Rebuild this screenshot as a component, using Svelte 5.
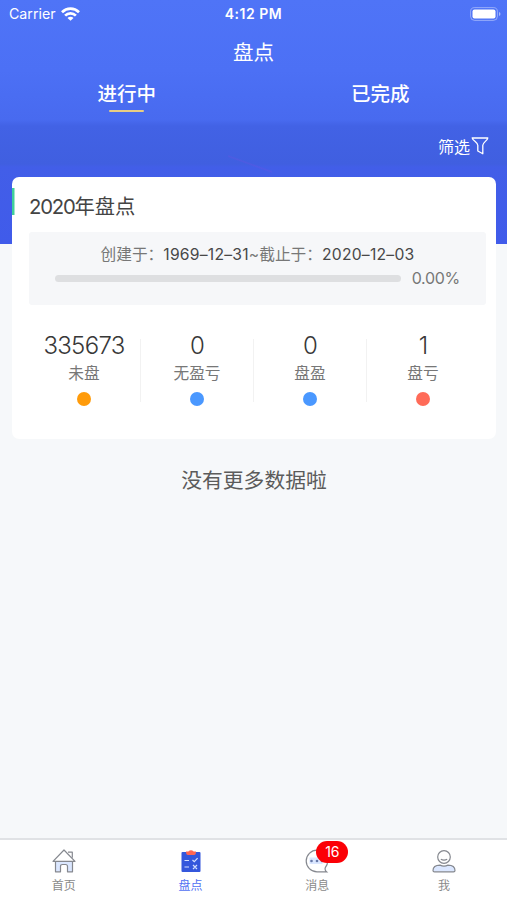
<script lang="ts">
	type Tab = { label: string; icon: 'home' | 'check' | 'message' | 'me'; badge?: number };

	const stats = [
		{ value: 335673, label: '未盘', tone: 'orange' },
		{ value: 0, label: '无盈亏', tone: 'blue' },
		{ value: 0, label: '盘盈', tone: 'blue' },
		{ value: 1, label: '盘亏', tone: 'red' }
	];

	const tabs: Tab[] = [
		{ label: '首页', icon: 'home' },
		{ label: '盘点', icon: 'check' },
		{ label: '消息', icon: 'message', badge: 16 },
		{ label: '我', icon: 'me' }
	];

	const progress = 0;
	let view = $state('进行中');
	let current = $state('盘点');
</script>

<div class="screen">
	<header>
		<div class="status-bar">
			<div class="carrier">
				<span>Carrier</span>
				<svg width="19" height="14" viewBox="0 0 19 14" fill="none" stroke="#fff" stroke-width="2.7">
					<path d="M1 5.2C5.8.5 13.2.5 18 5.2" />
					<path d="M4.1 8.6c3-3 7.8-3 10.8 0" />
					<path d="M9.5 13.8 6.5 10.9c1.6-1.5 4.4-1.5 6 0z" fill="#fff" stroke="none" />
				</svg>
			</div>
			<strong>4:12 PM</strong>
			<svg class="battery" width="31" height="14" viewBox="0 0 31 14">
				<rect x=".6" y=".6" width="26.8" height="12.8" rx="4" fill="none" stroke="#fff" stroke-opacity=".4" />
				<rect x="2.5" y="2.5" width="23" height="9" rx="2" fill="#fff" />
				<path d="M29 5v4q1.5-.7 1.5-2T29 5" fill="#fff" fill-opacity=".5" />
			</svg>
		</div>
		<h1>盘点</h1>
		<nav class="views">
			{#each ['进行中', '已完成'] as name}
				<button class:selected={view === name} onclick={() => (view = name)}>{name}</button>
			{/each}
		</nav>
		<div class="filter">
			<span>筛选</span>
			<svg width="18" height="18" viewBox="0 0 18 18" fill="none" stroke="#fff" stroke-width="1.3" stroke-linejoin="round">
				<path d="M1.2 1h15.6c-.2 2.5-5 4.5-5 7.2v8.6L6.8 14V8.2C6.8 5.5 1.5 3.5 1.2 1z" />
			</svg>
		</div>
	</header>

	<main>
		<article class="card">
			<h2><span class="num">2020</span>年盘点</h2>
			<section class="period">
				<p>创建于：<b>1969–12–31</b>~截止于：<b>2020–12–03</b></p>
				<div class="progress">
					<div class="track"><div class="fill" style="width: {progress}%"></div></div>
					<span>{progress.toFixed(2)}%</span>
				</div>
			</section>
			<section class="stats">
				{#each stats as stat}
					<div class="stat">
						<strong>{stat.value}</strong>
						<span>{stat.label}</span>
						<i class={stat.tone}></i>
					</div>
				{/each}
			</section>
		</article>
		<p class="no-more">没有更多数据啦</p>
	</main>

	<nav class="tab-bar">
		{#each tabs as tab}
			<button class:active={current === tab.label} onclick={() => (current = tab.label)}>
				<span class="icon">
					{#if tab.icon === 'home'}
						<svg width="24" height="24" viewBox="0 0 24 24" fill="none" stroke="#85888f" stroke-width="1.2" stroke-linejoin="round">
							<path d="M3.5 12.5h17v10.3h-5v-5.3q0-2-2-2h-3q-2 0-2 2v5.3h-5z" fill="#dbe7ff" />
							<path d="M1 12.3 12 1l11 11.3z" fill="#fff" />
							<path d="M16 3.2h4.3v5.5" />
						</svg>
					{:else if tab.icon === 'check'}
						<svg width="24" height="24" viewBox="0 0 24 24" fill="none">
							<rect x="2.5" y="3" width="19" height="20" rx="1" fill="#3457dc" />
							<path d="M7 2.5h2.3q2.7-2.6 5.4 0H17q0 3.5-2 3.5H9q-2 0-2-3.5z" fill="#ff6653" />
							<path d="M5.5 11.5H10M5.5 18H10M13.5 11l1.8 1.7 3.3-3.5M14 16l4 4M18 16l-4 4" stroke="#d5e0ff" stroke-width="1.2" />
						</svg>
					{:else if tab.icon === 'message'}
						<svg width="24" height="24" viewBox="0 0 24 24" fill="none">
							<path d="M12 1.2a10.8 10.8 0 1 0 0 21.6h9.5q-2-1.5-1.2-4.2A10.8 10.8 0 0 0 12 1.2z" fill="#fff" stroke="#85888f" stroke-width="1.2" />
							<path d="M4.5 8.5h13v6.5h-13z" fill="#dbe7ff" />
							<g fill="#6678a8"><circle cx="6.5" cy="12" r="1.3" /><circle cx="12" cy="12" r="1.3" /><circle cx="17" cy="12" r="1.3" /></g>
						</svg>
					{:else}
						<svg width="24" height="24" viewBox="0 0 24 24" fill="none" stroke="#85888f" stroke-width="1.2">
							<circle cx="12" cy="8" r="6.3" fill="#fff" />
							<path d="M8.8 10.2q3.2 1.8 6.4 0" />
							<path d="M1 21.5c0-4 3-5.4 7-5.4q4 2 8 0c4 0 7 1.4 7 5.4q0 1.3-1.5 1.3h-19Q1 22.8 1 21.5z" fill="#dbe7ff" />
						</svg>
					{/if}
					{#if tab.badge}
						<em>{tab.badge}</em>
					{/if}
				</span>
				<span>{tab.label}</span>
			</button>
		{/each}
	</nav>
</div>

<style>
	:global(body) {
		margin: 0;
	}

	.screen {
		display: flex;
		flex-direction: column;
		height: 900px;
		background: #f6f8fa;
		color: #444;
		font-family: Inter, 'Noto Sans CJK SC', sans-serif;
	}

	button {
		padding: 0;
		border: 0;
		background: none;
		color: inherit;
		font: inherit;
	}

	header {
		flex: none;
		box-sizing: border-box;
		height: 244px;
		color: #fff;
		background:
			linear-gradient(20deg, transparent 46%, rgb(112 80 225 / 30%) 50%, transparent 54%) 228px 153px / 44px 22px no-repeat,
			linear-gradient(#4f74f7 0, #4c70f5 70px, #486aef 120px, #4262e5 126px, #405fe0 164px, #425ee8 167px, #405bea 244px);
	}

	.status-bar {
		display: grid;
		grid-template-columns: 1fr auto 1fr;
		align-items: center;
		height: 27px;
		padding: 0 6px 0 9px;
		font-size: 14.2px;
	}

	.status-bar strong {
		margin-left: -3px;
		font-weight: 600;
		font-size: 14px;
		letter-spacing: 0.5px;
	}

	.carrier {
		display: flex;
		align-items: center;
		gap: 5px;
	}

	.battery {
		justify-self: end;
	}

	h1 {
		margin: 0;
		font-size: 20.5px;
		font-weight: 400;
		line-height: 51px;
		text-align: center;
	}

	.views {
		display: grid;
		grid-template-columns: 1fr 1fr;
		height: 46px;
	}

	.views button {
		display: flex;
		flex-direction: column;
		align-items: center;
		font-size: 19.5px;
		font-weight: 500;
		line-height: 32px;
	}

	.views .selected::after {
		content: '';
		width: 35px;
		height: 2px;
		border-radius: 1px;
		background: #e7cd83;
	}

	.filter {
		display: flex;
		align-items: center;
		justify-content: flex-end;
		gap: 1px;
		height: 43px;
		padding-right: 18px;
		font-size: 16px;
	}

	main {
		flex: 1;
		margin-top: -67px;
		padding: 0 11px 0 12px;
	}

	.card {
		box-sizing: border-box;
		height: 262px;
		padding: 11px 10px 0 17px;
		border-radius: 7px;
		background: linear-gradient(#3fcf9b, #3fcf9b) 0 11px / 2.5px 27px no-repeat #fff;
	}

	h2 {
		margin: 0;
		font-size: 20.3px;
		font-weight: 400;
		line-height: 38px;
	}

	.num {
		letter-spacing: -1.2px;
	}

	.period {
		box-sizing: border-box;
		height: 73px;
		margin-top: 6px;
		padding: 11px 26px 0;
		border-radius: 3px;
		background: #f6f7f9;
		color: #777;
	}

	.period p {
		margin: 0;
		font-size: 15.7px;
		line-height: 24px;
		text-align: center;
		white-space: nowrap;
	}

	.period b {
		color: #484848;
		font-weight: 400;
		letter-spacing: 0.23px;
	}

	.progress {
		display: flex;
		align-items: center;
		justify-content: space-between;
		font-size: 16px;
		line-height: 22px;
		letter-spacing: -0.3px;
	}

	.track {
		width: 346px;
		height: 7px;
		overflow: hidden;
		border-radius: 4px;
		background: #dedfe1;
	}

	.fill {
		height: 100%;
		background: #4a97fa;
	}

	.stats {
		display: grid;
		grid-template-columns: repeat(4, 113px);
		margin: 34px 0 0 -1px;
	}

	.stat {
		display: flex;
		flex-direction: column;
		align-items: center;
		box-sizing: border-box;
		height: 63px;
		padding-right: 1px;
	}

	.stat + .stat {
		box-shadow: -1px 0 #f2f2f2;
	}

	.stat strong {
		margin-top: -8px;
		color: #383838;
		font-size: 24px;
		font-weight: 300;
		line-height: 30px;
		letter-spacing: -0.7px;
	}

	.stat span {
		margin-top: 2px;
		color: #777;
		font-size: 15.7px;
		line-height: 22px;
	}

	.stat i {
		flex: none;
		width: 14px;
		height: 14px;
		margin-top: 7px;
		border-radius: 50%;
	}

	.orange {
		background: #ff9b0a;
	}

	.blue {
		background: #4a98ff;
	}

	.red {
		background: #ff6b58;
	}

	.no-more {
		margin: 27px 0 0;
		color: #5b5b5b;
		font-size: 20.8px;
		line-height: 30px;
		text-align: center;
	}

	.tab-bar {
		box-sizing: border-box;
		display: grid;
		grid-template-columns: repeat(4, 1fr);
		height: 62px;
		border-top: 2px solid #e0e2e5;
		background: #fff;
	}

	.tab-bar button {
		display: flex;
		flex-direction: column;
		align-items: center;
		padding: 9px 0 0 1px;
		color: #8a8a8a;
		font-size: 12px;
		line-height: 18px;
	}

	.tab-bar .active {
		color: #5271f3;
	}

	.icon {
		position: relative;
		height: 28px;
	}

	.icon svg {
		display: block;
	}

	em {
		position: absolute;
		top: -8px;
		left: 11px;
		width: 32px;
		border-radius: 11px;
		background: #fb0006;
		color: #fff;
		font-size: 14px;
		font-style: normal;
		line-height: 22px;
		text-align: center;
	}
</style>
